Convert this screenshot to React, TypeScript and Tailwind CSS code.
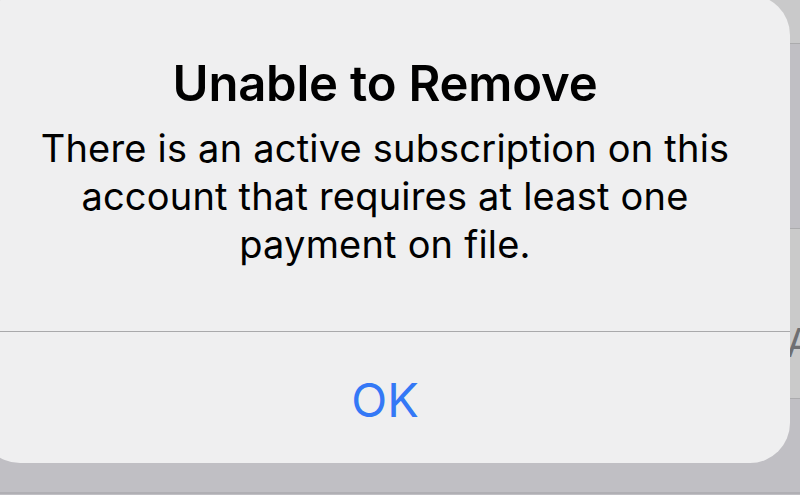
import React from 'react';

export default function App() {
    return (
        <div className="relative w-[800px] h-[495px] overflow-hidden bg-[#c0bfc4]" style={{ fontFamily: 'Inter, "Noto Sans", sans-serif' }}>
            {/* dimmed list behind the alert */}
            <div className="flex flex-col">
                <div className="h-[43px] bg-[#c9c9ca]"></div>
                <div className="h-px bg-[#ababad]"></div>
                <div className="h-[184px] bg-[#c0bfc4]"></div>
                <div className="h-px bg-[#ababad]"></div>
                <div className="h-[169px] bg-[#cacaca] flex items-center">
                    <span className="pl-[786px] text-[40px] leading-none text-[#6f6f72] mt-[58px]">A</span>
                </div>
                <div className="h-px bg-[#ababad]"></div>
                <div className="h-[93px] bg-[#c0bfc4]"></div>
                <div className="h-[2px] bg-[#b0afb4]"></div>
                <div className="flex-1 h-[2px] bg-[#c9c9cb]"></div>
            </div>

            {/* alert */}
            <div className="absolute left-[-20px] top-[-5px] w-[810px] h-[468px] rounded-[40px] bg-[#efeff0] flex flex-col">
                <div className="h-[336px] flex flex-col items-center pt-[60px] text-black">
                    <h1 className="text-[49px] font-semibold leading-[58px] tracking-[-0.2px]">Unable to Remove</h1>
                    <p className="mt-[11px] text-[38px] leading-[48px] text-center tracking-[0.2px]">
                        There is an active subscription on this<br />
                        account that requires at least one<br />
                        payment on file.
                    </p>
                </div>
                <div className="h-px bg-[#a9a9ab]"></div>
                <div className="flex-1 flex items-center justify-center pt-[4px]">
                    <span className="text-[47px] leading-none text-[#3478f6]">OK</span>
                </div>
            </div>
        </div>
    );
}
